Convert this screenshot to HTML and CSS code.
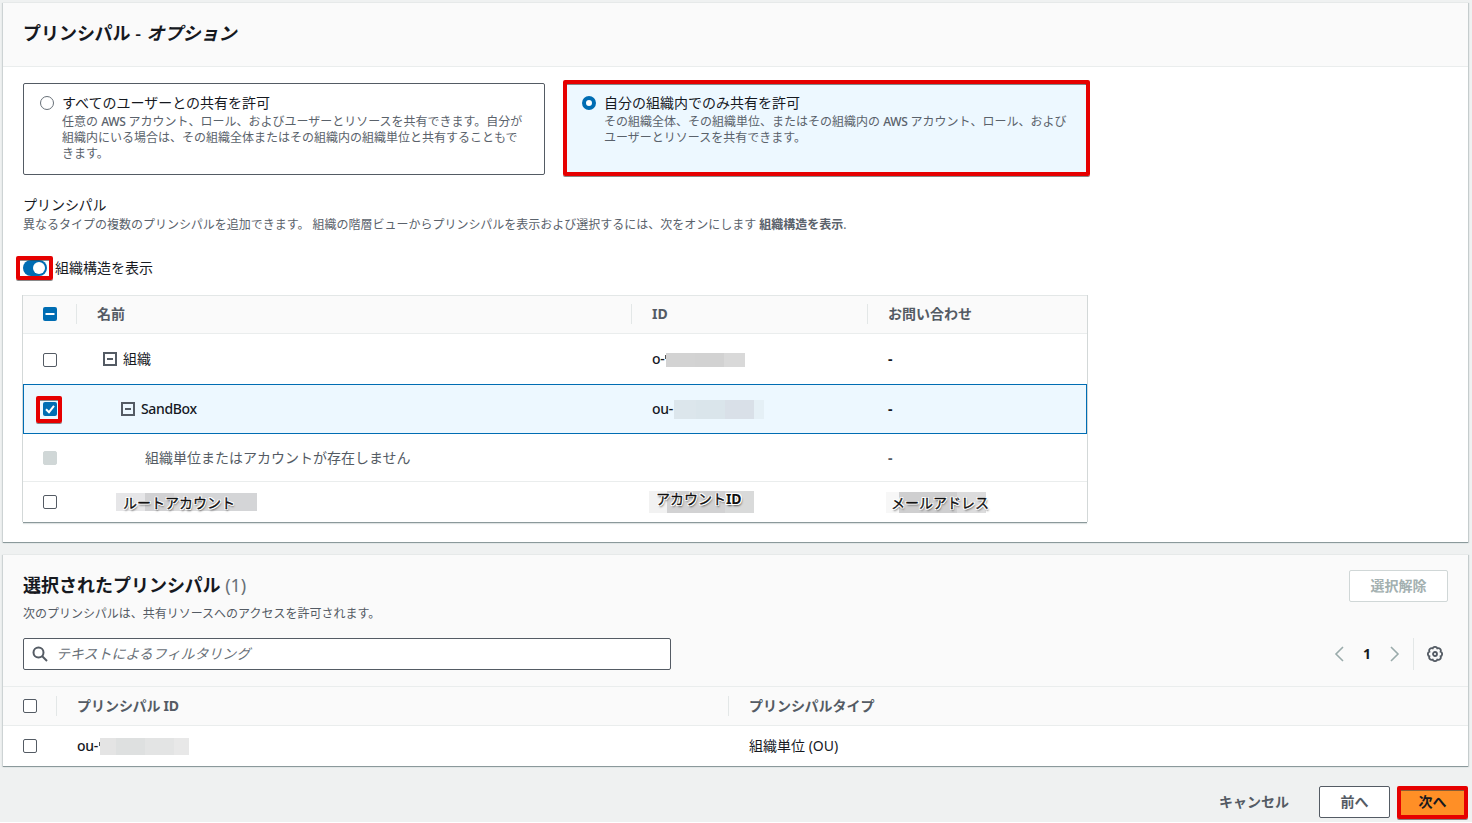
FILE: index.html
```html
<!DOCTYPE html>
<html lang="ja">
<head>
<meta charset="utf-8">
<title>プリンシパル</title>
<link rel="stylesheet" href="styles.css">
</head>
<body>
<section class="panel panel-options">
  <header class="panel-head"><h2 class="title">プリンシパル <span class="dash">-</span> <em>オプション</em></h2></header>
  <div class="panel-body">
    <div class="tiles">
      <div class="tile">
        <span class="radio"></span>
        <div class="tile-text">
          <div class="tile-label">すべてのユーザーとの共有を許可</div>
          <p class="hint">任意の <span class="aws">AWS</span> アカウント、ロール、およびユーザーとリソースを共有できます。自分が<br>組織内にいる場合は、その組織全体またはその組織内の組織単位と共有することもで<br>きます。</p>
        </div>
      </div>
      <div class="tile tile-on">
        <span class="radio radio-on"></span>
        <div class="tile-text">
          <div class="tile-label">自分の組織内でのみ共有を許可</div>
          <p class="hint">その組織全体、その組織単位、またはその組織内の <span class="aws">AWS</span> アカウント、ロール、および<br>ユーザーとリソースを共有できます。</p>
        </div>
        <span class="mark mark-tile"></span>
      </div>
    </div>
    <div class="field-label">プリンシパル</div>
    <p class="hint field-hint">異なるタイプの複数のプリンシパルを追加できます。 組織の階層ビューからプリンシパルを表示および選択するには、次をオンにします <b>組織構造を表示</b>.</p>
    <div class="toggle-row"><span class="toggle"><span class="mark mark-toggle"></span></span><span>組織構造を表示</span></div>
    <div class="tree">
      <div class="row tree-head">
        <div class="cell"><svg class="check" viewBox="0 0 14 14"><rect width="14" height="14" rx="2" fill="#006db3"/><path d="M2.5 7h9" stroke="#fff" stroke-width="2"/></svg></div>
        <div class="cell">名前</div><div class="cell">ID</div><div class="cell">お問い合わせ</div>
      </div>
      <div class="row row-org">
        <div class="cell"><span class="box"></span></div>
        <div class="cell level-1"><svg class="fold" viewBox="0 0 14 14"><rect x="1" y="1" width="12" height="12" /><path d="M4 7h6"/></svg>組織</div>
        <div class="cell latin">o-<span class="tick"></span><span class="mosaic mosaic-org"></span></div><div class="cell latin dash-cell">-</div>
      </div>
      <div class="row row-selected">
        <div class="cell"><span class="check-wrap"><svg class="check" viewBox="0 0 14 14"><rect width="14" height="14" rx="2" fill="#006db3"/><path d="M3 7.2l3 3 5-6.4" fill="none" stroke="#fff" stroke-width="2"/></svg><span class="mark mark-check"></span></span></div>
        <div class="cell level-2 latin"><svg class="fold" viewBox="0 0 14 14"><rect x="1" y="1" width="12" height="12" /><path d="M4 7h6"/></svg>SandBox</div>
        <div class="cell latin">ou-<span class="mosaic mosaic-ou"></span></div><div class="cell latin dash-cell">-</div>
      </div>
      <div class="row row-empty">
        <div class="cell"><span class="box box-off"></span></div>
        <div class="cell level-3">組織単位またはアカウントが存在しません</div>
        <div class="cell"></div><div class="cell latin dash-cell">-</div>
      </div>
      <div class="row row-root">
        <div class="cell"><span class="box"></span></div>
        <div class="cell"><span class="note note-root">ルートアカウント</span></div>
        <div class="cell"><span class="note note-id">アカウント<b>ID</b></span></div>
        <div class="cell"><span class="note note-mail">メールアドレス</span></div>
      </div>
    </div>
  </div>
</section>

<section class="panel panel-selected">
  <header class="selected-head">
    <div class="head-line">
      <div>
        <h2 class="title">選択されたプリンシパル <span class="count">(1)</span></h2>
        <p class="sub">次のプリンシパルは、共有リソースへのアクセスを許可されます。</p>
      </div>
      <button class="btn btn-off">選択解除</button>
    </div>
    <div class="tools">
      <div class="search">
        <svg class="search-icon" viewBox="0 0 16 16"><circle cx="6.5" cy="6.5" r="5"/><path d="M10 10l5 5"/></svg>
        <span>テキストによるフィルタリング</span>
      </div>
      <div class="pager">
        <svg class="chev" viewBox="0 0 10 16"><path d="M9 1L2 8l7 7"/></svg>
        <span class="page">1</span>
        <svg class="chev" viewBox="0 0 10 16"><path d="M1 1l7 7-7 7"/></svg>
        <span class="gear-wrap"><svg class="gear" viewBox="0 0 16 16"><path d="M5.700 2.400A2.500 2.500 0 0 1 10.300 2.400A2.500 2.500 0 0 1 13.600 5.700A2.500 2.500 0 0 1 13.600 10.300A2.500 2.500 0 0 1 10.300 13.600A2.500 2.500 0 0 1 5.700 13.600A2.500 2.500 0 0 1 2.400 10.300A2.500 2.500 0 0 1 2.400 5.700A2.500 2.500 0 0 1 5.700 2.400z"/><circle cx="8" cy="8" r="2"/></svg></span>
      </div>
    </div>
  </header>
  <div class="list-row list-head"><div class="cell"><span class="box"></span></div><div class="cell">プリンシパル<span class="id">ID</span></div><div class="cell">プリンシパルタイプ</div></div>
  <div class="list-row"><div class="cell"><span class="box"></span></div><div class="cell latin">ou-<span class="tick"></span><span class="mosaic mosaic-list"></span></div><div class="cell">組織単位 (OU)</div></div>
</section>

<footer class="actions">
  <span class="cancel">キャンセル</span>
  <button class="btn btn-back">前へ</button>
  <button class="btn btn-next">次へ<span class="mark mark-next"></span></button>
</footer>
</body>
</html>
```
FILE: styles.css
```css
* { box-sizing: border-box; }
html { background: #fff; overflow: hidden; }
body {
  margin: 0; height: 822px; padding: 2px 3px 0; width: 1472px; overflow: hidden;
  background: #eff1f1; color: #16191f;
  font: 14px/22px "Noto Sans", "Noto Sans CJK JP", sans-serif;
  white-space: nowrap;
}
h2, p { margin: 0; }
svg { display: block; flex: none; }
.panel {
  width: 1465px; background: #fff; border-top: 1px solid #e6e9e9;
  box-shadow: 0 1px 0 #8b999b, 1px 1px 1px #c5cccd, -1px 1px 1px #cdd3d4;
}
.panel-options { height: 540px; }
.panel-head { height: 64px; padding: 19px 20px 0; background: #fafafa; border-bottom: 1px solid #eaeded; }
.title { font-size: 18px; line-height: 22px; font-weight: 700; }
.title .dash { margin-right: 1px; font-weight: 500; }
.panel-body { padding: 16px 20px 0; }
.tiles { display: flex; gap: 20px; }
.tile { position: relative; display: flex; width: 522px; height: 92px; padding: 8px 15px; border: 1px solid #545b64; border-radius: 2px; }
.tile-on { background: #edf8ff; border-color: #006db3; }
.radio { width: 14px; height: 14px; margin: 4px 8px 0 1px; flex: none; border: 1px solid #687078; border-radius: 50%; background: #fff; }
.radio-on { border: 4.5px solid #006db3; }
.tile-label { height: 22px; line-height: 21px; }
.hint { font-size: 12px; line-height: 16px; color: #5a626b; }
.aws { letter-spacing: -.3px; font-weight: 500; }
.mark { position: absolute; border: 4px solid #e60000; border-radius: 2px; box-shadow: 0 1px 0 rgba(60, 60, 60, .6), inset 0 1px 0 rgba(60, 60, 60, .6); }
.mark-tile { left: -3px; top: -4px; width: 527px; height: 96px; }
.field-label { margin-top: 19px; }
.field-hint { margin-top: 1px; }
.toggle-row { display: flex; align-items: center; gap: 8px; height: 22px; margin-top: 24px; }
.toggle { position: relative; width: 24px; height: 16px; border-radius: 8px; background: #006db3; }
.toggle::after { content: ""; position: absolute; left: 10px; top: 2px; width: 12px; height: 12px; border-radius: 50%; background: #fff; }
.mark-toggle { left: -7px; top: -4px; width: 37px; height: 24px; z-index: 1; }
.tree { margin-top: 16px; width: 1064px; border-top: 1px solid #e3e7e7; box-shadow: 0 1px 0 #8b999b, 1px 0 0 #d3d8d8, -1px 0 0 #d3d8d8, 0 2px 1px #dfe3e3; }
.row { display: grid; grid-template-columns: 54px 555px 236px 1fr; align-items: center; }
.cell { display: flex; align-items: center; padding-left: 20px; }
.latin { font-weight: 500; letter-spacing: -.35px; }
.dash-cell { font-weight: 700; }
.tree-head { height: 38px; padding-bottom: 1px; background: #fafafa; border-bottom: 1px solid #eaeded; font-weight: 700; color: #545b64; }
.tree-head .cell { height: 20px; }
.tree-head .cell:not(:last-child), .list-head .cell:not(:last-child) { border-right: 1px solid #e3e7e7; }
.row-org { height: 50px; }
.row-org .box { margin-top: 2px; }
.row-selected { height: 50px; background: #edf8ff; outline: 1px solid #006db3; outline-offset: -1px; }
.row-empty { height: 48px; border-bottom: 1px solid #eaeded; color: #545b64; }
.row-root { height: 40px; }
.check, .box { width: 14px; height: 14px; flex: none; }
.box { border: 1px solid #545b64; border-radius: 2px; background: #fff; }
.box-off { border-color: #d0d7d7; background: #d0d7d7; }
.check-wrap { position: relative; }
.mark-check { left: -7px; top: -6px; width: 26px; height: 27px; }
.fold { width: 14px; height: 14px; margin-right: 6px; fill: none; stroke: #545b64; stroke-width: 2; }
.level-1 { padding-left: 26px; }
.level-2 { padding-left: 44px; }
.level-3 { padding-left: 68px; }
.mosaic { display: block; }
.tick { width: 1px; height: 4px; margin: -4px 0 0 1px; background: #555; }
.mosaic-org { width: 79px; height: 14px; margin-top: 1px; background: linear-gradient(90deg, #d3d3d3 0 29px, #d2d2d2 29px 58px, #d9d9d9 58px); }
.mosaic-ou { width: 90px; height: 19px; margin-left: 1px; background: linear-gradient(90deg, #dce6ec 0 22px, #dae5eb 22px 51px, #d9e0e8 51px 80px, #e5f0f6 80px); }
.mosaic-list { width: 89px; height: 17px; background: linear-gradient(90deg, #e4e4e4 0 16px, #dee0e0 16px 45px, #e3e4e4 45px 74px, #e8e8e8 74px); }
.note {
  display: block; color: #111; font-weight: 400; line-height: 18px; -webkit-text-stroke: .3px #111;
  text-shadow: 1px 0 #fff, -1px 0 #fff, 0 1px #fff, 0 -1px #fff, 1px 1px #fff, -1px -1px #fff, 1px -1px #fff, -1px 1px #fff, 1px 2px 2px #555;
}
.note b { -webkit-text-stroke: 0; letter-spacing: -.2px; }
.note-root { width: 141px; height: 18px; margin-left: 19px; padding-left: 7px; line-height: 19px; background: linear-gradient(90deg, #e6e6e8 0 29px, #d1d1d3 29px 58px, #dadadb 58px 87px, #d4d5d7 87px); }
.note-id { width: 105px; height: 22px; margin-left: -3px; padding-left: 7px; line-height: 16px; background: linear-gradient(90deg, #f2f2f2 0 18px, #d2d2d3 18px 76px, #d9dada 76px); }
.note-mail { width: 100px; height: 21px; margin-left: -2px; padding-left: 5px; line-height: 22px; background: linear-gradient(90deg, #f7f7f7 0 13px, #cfcfd0 13px 71px, #dcdcdd 71px); }

.panel-selected { height: 212px; margin-top: 12px; }
.selected-head { height: 132px; padding: 15px 20px 0; background: #fafafa; border-bottom: 1px solid #eaeded; }
.head-line { display: flex; justify-content: space-between; height: 68px; }
.head-line .title { margin-top: 4px; }
.count { font-weight: 400; color: #687078; }
.sub { margin-top: 10px; font-size: 12px; line-height: 16px; color: #545b64; }
.btn { position: relative; height: 32px; padding: 0; border: 1px solid #545b64; border-radius: 2px; background: #fff; color: #545b64; font: inherit; font-weight: 700; line-height: 30px; }
.btn-off { width: 99px; border-color: #d0d7d7; color: #a3b0b0; }
.tools { display: flex; justify-content: space-between; }
.search { display: flex; align-items: center; width: 648px; height: 32px; padding-left: 8px; gap: 8px; border: 1px solid #545b64; border-radius: 2px; background: #fff; color: #687078; font-style: italic; letter-spacing: -.05px; }
.search-icon { width: 16px; height: 16px; fill: none; stroke: #545b64; stroke-width: 2; }
.pager { display: flex; align-items: center; }
.chev { width: 10px; height: 16px; fill: none; stroke: #9aabab; stroke-width: 1.6; }
.page { width: 46px; text-align: center; font-size: 14px; font-weight: 700; }
.gear-wrap { display: flex; align-items: center; height: 32px; margin-left: 13px; padding: 0 5px 0 13px; border-left: 1px solid #e3e7e7; }
.gear { width: 16px; height: 16px; fill: none; stroke: #545b64; stroke-width: 1.8; }
.list-row { display: grid; grid-template-columns: 54px 672px 1fr; align-items: center; height: 40px; }
.list-head { height: 39px; background: #fafafa; border-bottom: 1px solid #eaeded; font-weight: 700; color: #545b64; }
.list-head .cell { height: 20px; }
.id { margin-left: 3px; letter-spacing: -.3px; }
.actions { display: flex; align-items: center; justify-content: flex-end; height: 32px; margin-top: 20px; padding-right: 2px; font-weight: 700; }
.cancel { margin-right: 30px; color: #545b64; }
.btn-back { width: 71px; margin-right: 8px; }
.btn-next { width: 69px; border-color: #ff8f26; background: #ff8f26; color: #16191f; }
.mark-next { left: -2px; top: -1px; width: 71px; height: 33px; }
```
